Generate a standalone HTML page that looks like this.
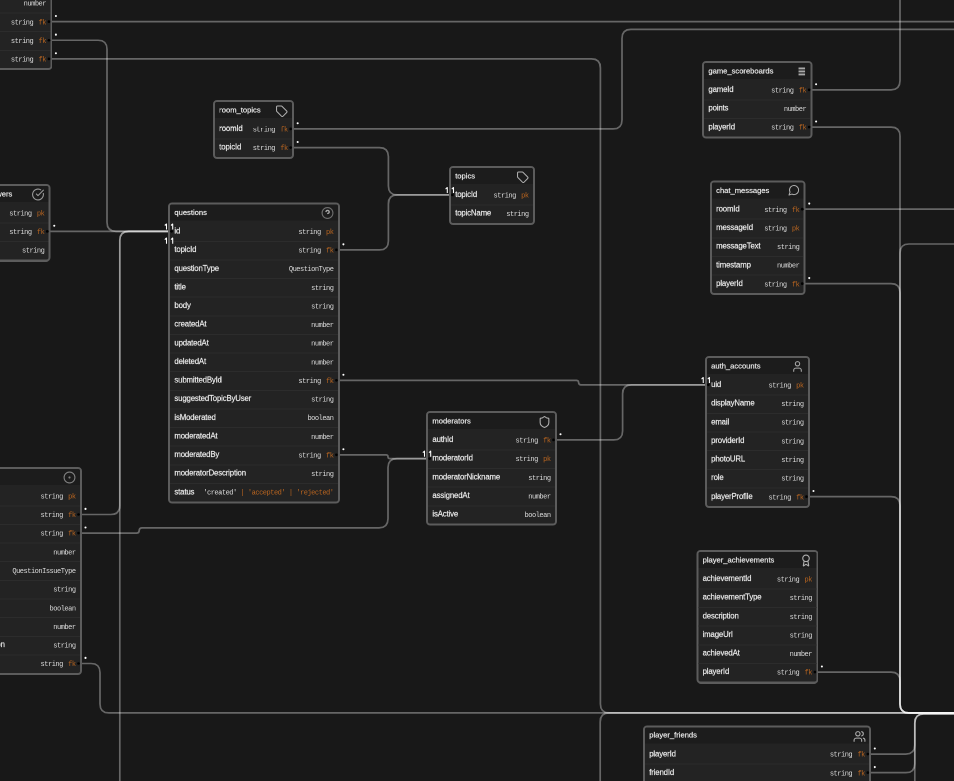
<!DOCTYPE html>
<html><head><meta charset="utf-8"><style>
html,body{margin:0;padding:0;background:#181818;width:954px;height:781px;overflow:hidden}
body{position:relative;font-family:"Liberation Sans",sans-serif}
#c{position:absolute;left:0;top:0;width:1908px;height:1562px;transform:scale(0.5);transform-origin:0 0;will-change:transform}
.tb{position:absolute;box-sizing:border-box;border:4px solid #5c5c5c;border-radius:8px;background:#232323;overflow:hidden}
.hd{position:absolute;left:0;right:0;top:-4px;background:#1c1c1c}
.tt,.fn,.tw{position:absolute;white-space:pre}
.tt{-webkit-text-stroke-width:0.36px;font-size:15.2px;line-height:18.24px;color:#ececec;margin-left:-4px;margin-top:-4px}
.fn{-webkit-text-stroke-width:0.36px;letter-spacing:-0.3px;font-size:15.6px;line-height:18.72px;color:#ececec;margin-left:-4px;margin-top:-4px}
.tw{font-family:"Liberation Mono",monospace;font-size:14px;letter-spacing:-0.96px;line-height:16.8px;margin-right:-4px;margin-top:-4px}
.ic{position:absolute;color:#b0b0b0;margin-left:-4px;margin-top:-4px}
.sp{position:absolute;left:0;right:0;height:2px;background:#2c2c2c;margin-top:-4px}
.ty{color:#dedede}
.ky{color:#bb6620;margin-left:10.6px}
.ky0{color:#bb6620}
svg.edges{position:absolute;left:0;top:0;overflow:visible}
.lb{font-family:"Liberation Sans",sans-serif;font-size:8px;fill:#fff}
.one{font-family:"Liberation Sans",sans-serif;font-size:8.3px;fill:#fff}
</style></head>
<body>
<svg class="edges" width="954" height="781" viewBox="0 0 954 781"><path d="M51.30 21.64 L960.00 21.64" fill="none" stroke="#ffffff" stroke-opacity="0.34" stroke-width="1.7"/><path d="M51.30 40.27 L98.00 40.27 Q107.00 40.27 107.00 49.27 L107.00 222.30 Q107.00 231.30 116.00 231.30 L169.10 231.30" fill="none" stroke="#ffffff" stroke-opacity="0.34" stroke-width="1.7"/><path d="M51.30 58.89 L591.40 58.89 Q600.40 58.89 600.40 67.89 L600.40 703.90 Q600.40 712.90 609.40 712.90 L960.00 712.90" fill="none" stroke="#ffffff" stroke-opacity="0.34" stroke-width="1.7"/><path d="M49.65 231.38 L169.10 231.30" fill="none" stroke="#ffffff" stroke-opacity="0.34" stroke-width="1.7"/><path d="M80.90 514.49 L110.80 514.49 Q119.80 514.49 119.80 505.49 L119.80 240.30 Q119.80 231.30 128.80 231.30 L169.10 231.30" fill="none" stroke="#ffffff" stroke-opacity="0.34" stroke-width="1.7"/><path d="M119.80 800.00 L119.80 240.30 Q119.80 231.30 128.80 231.30 L169.10 231.30" fill="none" stroke="#ffffff" stroke-opacity="0.34" stroke-width="1.7"/><path d="M80.90 533.12 L136.54 533.12 Q139.20 533.12 139.20 530.46 L139.20 530.46 Q139.20 527.80 141.86 527.80 L379.00 527.80 Q388.00 527.80 388.00 518.80 L388.00 467.53 Q388.00 458.53 397.00 458.53 L427.10 458.53" fill="none" stroke="#ffffff" stroke-opacity="0.34" stroke-width="1.7"/><path d="M338.80 454.86 L386.16 454.86 Q388.00 454.86 388.00 456.69 L388.00 456.69 Q388.00 458.53 389.84 458.53 L427.10 458.53" fill="none" stroke="#ffffff" stroke-opacity="0.34" stroke-width="1.7"/><path d="M80.90 663.52 L91.00 663.52 Q100.00 663.52 100.00 672.52 L100.00 703.90 Q100.00 712.90 109.00 712.90 L960.00 712.90" fill="none" stroke="#ffffff" stroke-opacity="0.34" stroke-width="1.7"/><path d="M293.08 128.90 L613.00 128.90 Q622.00 128.90 622.00 119.90 L622.00 38.40 Q622.00 29.40 631.00 29.40 L960.00 29.40" fill="none" stroke="#ffffff" stroke-opacity="0.34" stroke-width="1.7"/><path d="M293.08 147.53 L379.40 147.53 Q388.40 147.53 388.40 156.53 L388.40 185.89 Q388.40 194.89 397.40 194.89 L449.90 194.89" fill="none" stroke="#ffffff" stroke-opacity="0.34" stroke-width="1.7"/><path d="M338.80 249.93 L379.40 249.93 Q388.40 249.93 388.40 240.93 L388.40 203.89 Q388.40 194.89 397.40 194.89 L449.90 194.89" fill="none" stroke="#ffffff" stroke-opacity="0.34" stroke-width="1.7"/><path d="M338.80 380.33 L576.34 380.33 Q578.60 380.33 578.60 382.60 L578.60 382.60 Q578.60 384.86 580.86 384.86 L705.85 384.86" fill="none" stroke="#ffffff" stroke-opacity="0.34" stroke-width="1.7"/><path d="M555.90 439.90 L613.60 439.90 Q622.60 439.90 622.60 430.90 L622.60 393.86 Q622.60 384.86 631.60 384.86 L705.85 384.86" fill="none" stroke="#ffffff" stroke-opacity="0.34" stroke-width="1.7"/><path d="M811.50 89.86 L891.00 89.86 Q900.00 89.86 900.00 80.86 L900.00 -20.00" fill="none" stroke="#ffffff" stroke-opacity="0.34" stroke-width="1.7"/><path d="M811.50 127.12 L891.00 127.12 Q900.00 127.12 900.00 136.12 L900.00 703.90 Q900.00 712.90 909.00 712.90 L960.00 712.90" fill="none" stroke="#ffffff" stroke-opacity="0.34" stroke-width="1.7"/><path d="M804.65 209.19 L960.00 209.19" fill="none" stroke="#ffffff" stroke-opacity="0.34" stroke-width="1.7"/><path d="M804.65 283.71 L891.00 283.71 Q900.00 283.71 900.00 292.71 L900.00 703.90 Q900.00 712.90 909.00 712.90 L960.00 712.90" fill="none" stroke="#ffffff" stroke-opacity="0.34" stroke-width="1.7"/><path d="M808.87 496.64 L891.00 496.64 Q900.00 496.64 900.00 505.64 L900.00 703.90 Q900.00 712.90 909.00 712.90 L960.00 712.90" fill="none" stroke="#ffffff" stroke-opacity="0.34" stroke-width="1.7"/><path d="M960.00 244.00 L909.00 244.00 Q900.00 244.00 900.00 253.00 L900.00 703.90 Q900.00 712.90 909.00 712.90 L960.00 712.90" fill="none" stroke="#ffffff" stroke-opacity="0.34" stroke-width="1.7"/><path d="M817.30 672.04 L891.00 672.04 Q900.00 672.04 900.00 681.04 L900.00 703.90 Q900.00 712.90 909.00 712.90 L960.00 712.90" fill="none" stroke="#ffffff" stroke-opacity="0.34" stroke-width="1.7"/><path d="M600.20 800.00 L600.20 721.90 Q600.20 712.90 609.20 712.90 L960.00 712.90" fill="none" stroke="#ffffff" stroke-opacity="0.34" stroke-width="1.7"/><path d="M870.20 754.09 L905.80 754.09 Q914.80 754.09 914.80 745.09 L914.80 723.00 Q914.80 714.00 923.80 714.00 L960.00 714.00" fill="none" stroke="#ffffff" stroke-opacity="0.34" stroke-width="1.7"/><path d="M870.20 772.72 L905.80 772.72 Q914.80 772.72 914.80 763.72 L914.80 723.00 Q914.80 714.00 923.80 714.00 L960.00 714.00" fill="none" stroke="#ffffff" stroke-opacity="0.34" stroke-width="1.7"/><path d="M914.80 800.00 L914.80 723.00 Q914.80 714.00 923.80 714.00 L960.00 714.00" fill="none" stroke="#ffffff" stroke-opacity="0.34" stroke-width="1.7"/></svg>
<div id="c"><div class="tb" style="left:-280px;top:-126.1px;width:384.6px;height:266.5px"><div class="hd" style="height:36px"></div><div class="tt" style="left:12.6px;top:10.813px">users</div><svg class="ic" style="color:#a8a8a8;left:346.6px;top:8.2px;width:26px;height:26px" viewBox="0 0 24 24" fill="none" stroke="currentColor" stroke-width="2" stroke-linecap="round" stroke-linejoin="round"><path d="M19 21v-2a4 4 0 0 0-4-4H9a4 4 0 0 0-4 4v2"/><circle cx="12" cy="7" r="4"/></svg><div class="fn" style="left:12.6px;top:48.005px">id</div><div class="tw" style="right:12.6px;top:50.839px"><span class="ty">string</span><span class="ky">pk</span></div><div class="sp" style="top:76.6px"></div><div class="fn" style="left:12.6px;top:85.265px">email</div><div class="tw" style="right:12.6px;top:88.099px"><span class="ty">string</span></div><div class="sp" style="top:113.86px"></div><div class="fn" style="left:12.6px;top:122.525px">createdAt</div><div class="tw" style="right:12.6px;top:125.359px"><span class="ty">number</span></div><div class="sp" style="top:151.12px"></div><div class="fn" style="left:12.6px;top:159.785px">roomId</div><div class="tw" style="right:12.6px;top:162.619px"><span class="ty">string</span><span class="ky">fk</span></div><div class="sp" style="top:188.38px"></div><div class="fn" style="left:12.6px;top:197.045px">gameId</div><div class="tw" style="right:12.6px;top:199.879px"><span class="ty">string</span><span class="ky">fk</span></div><div class="sp" style="top:225.64px"></div><div class="fn" style="left:12.6px;top:234.305px">teamId</div><div class="tw" style="right:12.6px;top:237.139px"><span class="ty">string</span><span class="ky">fk</span></div></div><div class="tb" style="left:-44.6px;top:367.92px;width:145.9px;height:154.72px"><div class="hd" style="height:36px"></div><div class="tt" style="left:12.6px;top:10.813px">answers</div><svg class="ic" style="color:#9a9a9a;left:107.9px;top:8.2px;width:26px;height:26px" viewBox="0 0 24 24" fill="none" stroke="currentColor" stroke-width="2" stroke-linecap="round" stroke-linejoin="round"><path d="M21.801 10A10 10 0 1 1 17 3.335"/><path d="m9 11 3 3L22 4"/></svg><div class="fn" style="left:12.6px;top:48.005px">id</div><div class="tw" style="right:12.6px;top:50.839px"><span class="ty">string</span><span class="ky">pk</span></div><div class="sp" style="top:76.6px"></div><div class="fn" style="left:12.6px;top:85.265px">qId</div><div class="tw" style="right:12.6px;top:88.099px"><span class="ty">string</span><span class="ky">fk</span></div><div class="sp" style="top:113.86px"></div><div class="fn" style="left:12.6px;top:122.525px">text</div><div class="tw" style="right:12.6px;top:125.359px"><span class="ty">string</span></div></div><div class="tb" style="left:425.92px;top:200.2px;width:162.24px;height:117.46px"><div class="hd" style="height:36px"></div><div class="tt" style="left:12.6px;top:10.813px">room_topics</div><svg class="ic" style="color:#b0b0b0;left:125.16px;top:9.32px;width:24.96px;height:24.96px" viewBox="0 0 24 24" fill="none" stroke="currentColor" stroke-width="2" stroke-linecap="round" stroke-linejoin="round"><path d="M12.586 2.586A2 2 0 0 0 11.172 2H4a2 2 0 0 0-2 2v7.172a2 2 0 0 0 .586 1.414l8.704 8.704a2.426 2.426 0 0 0 3.42 0l6.58-6.58a2.426 2.426 0 0 0 0-3.42z"/></svg><div class="fn" style="left:12.6px;top:48.005px">roomId</div><div class="tw" style="right:12.6px;top:50.839px"><span class="ty">string</span><span class="ky">fk</span></div><div class="sp" style="top:76.6px"></div><div class="fn" style="left:12.6px;top:85.265px">topicId</div><div class="tw" style="right:12.6px;top:88.099px"><span class="ty">string</span><span class="ky">fk</span></div></div><div class="tb" style="left:336.2px;top:405px;width:343.4px;height:601.84px"><div class="hd" style="height:36px"></div><div class="tt" style="left:12.6px;top:10.813px">questions</div><svg class="ic" style="color:#7e7e7e;left:305.4px;top:8.2px;width:26px;height:26px" viewBox="0 0 24 24" fill="none" stroke="currentColor" stroke-width="2" stroke-linecap="round" stroke-linejoin="round"><circle cx="12" cy="12" r="10" stroke="#6e6e6e"/><path d="M9.3 9.2a3 3 0 0 1 5.8 1c0 2-2.6 2.6-2.6 2.6" stroke="#a8a8a8" stroke-width="2.6"/></svg><div class="fn" style="left:12.6px;top:48.005px">id</div><div class="tw" style="right:12.6px;top:50.839px"><span class="ty">string</span><span class="ky">pk</span></div><div class="sp" style="top:76.6px"></div><div class="fn" style="left:12.6px;top:85.265px">topicId</div><div class="tw" style="right:12.6px;top:88.099px"><span class="ty">string</span><span class="ky">fk</span></div><div class="sp" style="top:113.86px"></div><div class="fn" style="left:12.6px;top:122.525px">questionType</div><div class="tw" style="right:12.6px;top:125.359px"><span class="ty">QuestionType</span></div><div class="sp" style="top:151.12px"></div><div class="fn" style="left:12.6px;top:159.785px">title</div><div class="tw" style="right:12.6px;top:162.619px"><span class="ty">string</span></div><div class="sp" style="top:188.38px"></div><div class="fn" style="left:12.6px;top:197.045px">body</div><div class="tw" style="right:12.6px;top:199.879px"><span class="ty">string</span></div><div class="sp" style="top:225.64px"></div><div class="fn" style="left:12.6px;top:234.305px">createdAt</div><div class="tw" style="right:12.6px;top:237.139px"><span class="ty">number</span></div><div class="sp" style="top:262.9px"></div><div class="fn" style="left:12.6px;top:271.565px">updatedAt</div><div class="tw" style="right:12.6px;top:274.399px"><span class="ty">number</span></div><div class="sp" style="top:300.16px"></div><div class="fn" style="left:12.6px;top:308.825px">deletedAt</div><div class="tw" style="right:12.6px;top:311.659px"><span class="ty">number</span></div><div class="sp" style="top:337.42px"></div><div class="fn" style="left:12.6px;top:346.085px">submittedById</div><div class="tw" style="right:12.6px;top:348.919px"><span class="ty">string</span><span class="ky">fk</span></div><div class="sp" style="top:374.68px"></div><div class="fn" style="left:12.6px;top:383.345px">suggestedTopicByUser</div><div class="tw" style="right:12.6px;top:386.179px"><span class="ty">string</span></div><div class="sp" style="top:411.94px"></div><div class="fn" style="left:12.6px;top:420.605px">isModerated</div><div class="tw" style="right:12.6px;top:423.439px"><span class="ty">boolean</span></div><div class="sp" style="top:449.2px"></div><div class="fn" style="left:12.6px;top:457.865px">moderatedAt</div><div class="tw" style="right:12.6px;top:460.699px"><span class="ty">number</span></div><div class="sp" style="top:486.46px"></div><div class="fn" style="left:12.6px;top:495.125px">moderatedBy</div><div class="tw" style="right:12.6px;top:497.959px"><span class="ty">string</span><span class="ky">fk</span></div><div class="sp" style="top:523.72px"></div><div class="fn" style="left:12.6px;top:532.385px">moderatorDescription</div><div class="tw" style="right:12.6px;top:535.219px"><span class="ty">string</span></div><div class="sp" style="top:560.98px"></div><div class="fn" style="left:12.6px;top:569.645px">status</div><div class="tw" style="right:12.6px;top:572.479px"><span class="ty">'created'</span><span class="ky0"> | 'accepted' | 'rejected'</span></div></div><div class="tb" style="left:897.8px;top:332.2px;width:172px;height:117.46px"><div class="hd" style="height:36px"></div><div class="tt" style="left:12.6px;top:10.813px">topics</div><svg class="ic" style="color:#b0b0b0;left:134.92px;top:9.32px;width:24.96px;height:24.96px" viewBox="0 0 24 24" fill="none" stroke="currentColor" stroke-width="2" stroke-linecap="round" stroke-linejoin="round"><path d="M12.586 2.586A2 2 0 0 0 11.172 2H4a2 2 0 0 0-2 2v7.172a2 2 0 0 0 .586 1.414l8.704 8.704a2.426 2.426 0 0 0 3.42 0l6.58-6.58a2.426 2.426 0 0 0 0-3.42z"/></svg><div class="fn" style="left:12.6px;top:48.005px">topicId</div><div class="tw" style="right:12.6px;top:50.839px"><span class="ty">string</span><span class="ky">pk</span></div><div class="sp" style="top:76.6px"></div><div class="fn" style="left:12.6px;top:85.265px">topicName</div><div class="tw" style="right:12.6px;top:88.099px"><span class="ty">string</span></div></div><div class="tb" style="left:-67.6px;top:934.12px;width:231.4px;height:415.54px"><div class="hd" style="height:36px"></div><div class="tt" style="left:12.6px;top:10.813px">reports</div><svg class="ic" style="color:#808080;left:193.4px;top:8.2px;width:26px;height:26px" viewBox="0 0 24 24" fill="none" stroke="currentColor" stroke-width="2" stroke-linecap="round" stroke-linejoin="round"><circle cx="12" cy="12" r="10"/><circle cx="12" cy="12" r="1"/></svg><div class="fn" style="left:12.6px;top:48.005px">id</div><div class="tw" style="right:12.6px;top:50.839px"><span class="ty">string</span><span class="ky">pk</span></div><div class="sp" style="top:76.6px"></div><div class="fn" style="left:12.6px;top:85.265px">qid</div><div class="tw" style="right:12.6px;top:88.099px"><span class="ty">string</span><span class="ky">fk</span></div><div class="sp" style="top:113.86px"></div><div class="fn" style="left:12.6px;top:122.525px">mid</div><div class="tw" style="right:12.6px;top:125.359px"><span class="ty">string</span><span class="ky">fk</span></div><div class="sp" style="top:151.12px"></div><div class="fn" style="left:12.6px;top:159.785px">at</div><div class="tw" style="right:12.6px;top:162.619px"><span class="ty">number</span></div><div class="sp" style="top:188.38px"></div><div class="fn" style="left:12.6px;top:197.045px">type</div><div class="tw" style="right:12.6px;top:199.879px"><span class="ty">QuestionIssueType</span></div><div class="sp" style="top:225.64px"></div><div class="fn" style="left:12.6px;top:234.305px">text</div><div class="tw" style="right:12.6px;top:237.139px"><span class="ty">string</span></div><div class="sp" style="top:262.9px"></div><div class="fn" style="left:12.6px;top:271.565px">done</div><div class="tw" style="right:12.6px;top:274.399px"><span class="ty">boolean</span></div><div class="sp" style="top:300.16px"></div><div class="fn" style="left:12.6px;top:308.825px">ts</div><div class="tw" style="right:12.6px;top:311.659px"><span class="ty">number</span></div><div class="sp" style="top:337.42px"></div><div class="fn" style="left:12.6px;top:346.085px">resolution</div><div class="tw" style="right:12.6px;top:348.919px"><span class="ty">string</span></div><div class="sp" style="top:374.68px"></div><div class="fn" style="left:12.6px;top:383.345px">by</div><div class="tw" style="right:12.6px;top:386.179px"><span class="ty">string</span><span class="ky">fk</span></div></div><div class="tb" style="left:852.2px;top:822.2px;width:261.6px;height:229.24px"><div class="hd" style="height:36px"></div><div class="tt" style="left:12.6px;top:10.813px">moderators</div><svg class="ic" style="color:#b0b0b0;left:223.6px;top:9.2px;width:26px;height:26px" viewBox="0 0 24 24" fill="none" stroke="currentColor" stroke-width="2" stroke-linecap="round" stroke-linejoin="round"><path d="M20 13c0 5-3.5 7.5-7.66 8.95a1 1 0 0 1-.67-.01C7.5 20.5 4 18 4 13V6a1 1 0 0 1 1-1c2 0 4.5-1.2 6.24-2.72a1.17 1.17 0 0 1 1.52 0C14.51 3.81 17 5 19 5a1 1 0 0 1 1 1z"/></svg><div class="fn" style="left:12.6px;top:48.005px">authId</div><div class="tw" style="right:12.6px;top:50.839px"><span class="ty">string</span><span class="ky">fk</span></div><div class="sp" style="top:76.6px"></div><div class="fn" style="left:12.6px;top:85.265px">moderatorId</div><div class="tw" style="right:12.6px;top:88.099px"><span class="ty">string</span><span class="ky">pk</span></div><div class="sp" style="top:113.86px"></div><div class="fn" style="left:12.6px;top:122.525px">moderatorNickname</div><div class="tw" style="right:12.6px;top:125.359px"><span class="ty">string</span></div><div class="sp" style="top:151.12px"></div><div class="fn" style="left:12.6px;top:159.785px">assignedAt</div><div class="tw" style="right:12.6px;top:162.619px"><span class="ty">number</span></div><div class="sp" style="top:188.38px"></div><div class="fn" style="left:12.6px;top:197.045px">isActive</div><div class="tw" style="right:12.6px;top:199.879px"><span class="ty">boolean</span></div></div><div class="tb" style="left:1404.2px;top:122.12px;width:220.8px;height:154.72px"><div class="hd" style="height:36px"></div><div class="tt" style="left:12.6px;top:10.813px">game_scoreboards</div><svg class="ic" style="color:#a8a8a8;left:182.8px;top:8.2px;width:26px;height:26px" viewBox="0 0 24 24" fill="none" stroke="currentColor" stroke-width="2" stroke-linecap="round" stroke-linejoin="round"><path d="M9.3 6.3h12M9.3 11.9h12M9.3 17.5h12" stroke-width="3.4" stroke-linecap="butt"/></svg><div class="fn" style="left:12.6px;top:48.005px">gameId</div><div class="tw" style="right:12.6px;top:50.839px"><span class="ty">string</span><span class="ky">fk</span></div><div class="sp" style="top:76.6px"></div><div class="fn" style="left:12.6px;top:85.265px">points</div><div class="tw" style="right:12.6px;top:88.099px"><span class="ty">number</span></div><div class="sp" style="top:113.86px"></div><div class="fn" style="left:12.6px;top:122.525px">playerId</div><div class="tw" style="right:12.6px;top:125.359px"><span class="ty">string</span><span class="ky">fk</span></div></div><div class="tb" style="left:1419.7px;top:360.8px;width:191.6px;height:229.24px"><div class="hd" style="height:36px"></div><div class="tt" style="left:12.6px;top:10.813px">chat_messages</div><svg class="ic" style="color:#b0b0b0;left:156.11px;top:7.51px;width:24.18px;height:24.18px" viewBox="0 0 24 24" fill="none" stroke="currentColor" stroke-width="2" stroke-linecap="round" stroke-linejoin="round"><path d="M7.9 20A9 9 0 1 0 4 16.1L2 22Z"/></svg><div class="fn" style="left:12.6px;top:48.005px">roomId</div><div class="tw" style="right:12.6px;top:50.839px"><span class="ty">string</span><span class="ky">fk</span></div><div class="sp" style="top:76.6px"></div><div class="fn" style="left:12.6px;top:85.265px">messageId</div><div class="tw" style="right:12.6px;top:88.099px"><span class="ty">string</span><span class="ky">pk</span></div><div class="sp" style="top:113.86px"></div><div class="fn" style="left:12.6px;top:122.525px">messageText</div><div class="tw" style="right:12.6px;top:125.359px"><span class="ty">string</span></div><div class="sp" style="top:151.12px"></div><div class="fn" style="left:12.6px;top:159.785px">timestamp</div><div class="tw" style="right:12.6px;top:162.619px"><span class="ty">number</span></div><div class="sp" style="top:188.38px"></div><div class="fn" style="left:12.6px;top:197.045px">playerId</div><div class="tw" style="right:12.6px;top:199.879px"><span class="ty">string</span><span class="ky">fk</span></div></div><div class="tb" style="left:1409.7px;top:712.12px;width:210.04px;height:303.76px"><div class="hd" style="height:36px"></div><div class="tt" style="left:12.6px;top:10.813px">auth_accounts</div><svg class="ic" style="color:#a8a8a8;left:172.04px;top:8.2px;width:26px;height:26px" viewBox="0 0 24 24" fill="none" stroke="currentColor" stroke-width="2" stroke-linecap="round" stroke-linejoin="round"><path d="M19 21v-2a4 4 0 0 0-4-4H9a4 4 0 0 0-4 4v2"/><circle cx="12" cy="7" r="4"/></svg><div class="fn" style="left:12.6px;top:48.005px">uid</div><div class="tw" style="right:12.6px;top:50.839px"><span class="ty">string</span><span class="ky">pk</span></div><div class="sp" style="top:76.6px"></div><div class="fn" style="left:12.6px;top:85.265px">displayName</div><div class="tw" style="right:12.6px;top:88.099px"><span class="ty">string</span></div><div class="sp" style="top:113.86px"></div><div class="fn" style="left:12.6px;top:122.525px">email</div><div class="tw" style="right:12.6px;top:125.359px"><span class="ty">string</span></div><div class="sp" style="top:151.12px"></div><div class="fn" style="left:12.6px;top:159.785px">providerId</div><div class="tw" style="right:12.6px;top:162.619px"><span class="ty">string</span></div><div class="sp" style="top:188.38px"></div><div class="fn" style="left:12.6px;top:197.045px">photoURL</div><div class="tw" style="right:12.6px;top:199.879px"><span class="ty">string</span></div><div class="sp" style="top:225.64px"></div><div class="fn" style="left:12.6px;top:234.305px">role</div><div class="tw" style="right:12.6px;top:237.139px"><span class="ty">string</span></div><div class="sp" style="top:262.9px"></div><div class="fn" style="left:12.6px;top:271.565px">playerProfile</div><div class="tw" style="right:12.6px;top:274.399px"><span class="ty">string</span><span class="ky">fk</span></div></div><div class="tb" style="left:1392.6px;top:1100.2px;width:244px;height:266.5px"><div class="hd" style="height:36px"></div><div class="tt" style="left:12.6px;top:10.813px">player_achievements</div><svg class="ic" style="color:#b0b0b0;left:206px;top:8.2px;width:26px;height:26px" viewBox="0 0 24 24" fill="none" stroke="currentColor" stroke-width="2" stroke-linecap="round" stroke-linejoin="round"><path d="m15.477 12.89 1.515 8.526a.5.5 0 0 1-.81.47l-3.58-2.687a1 1 0 0 0-1.197 0l-3.586 2.686a.5.5 0 0 1-.81-.469l1.514-8.526"/><circle cx="12" cy="8" r="6"/></svg><div class="fn" style="left:12.6px;top:48.005px">achievementId</div><div class="tw" style="right:12.6px;top:50.839px"><span class="ty">string</span><span class="ky">pk</span></div><div class="sp" style="top:76.6px"></div><div class="fn" style="left:12.6px;top:85.265px">achievementType</div><div class="tw" style="right:12.6px;top:88.099px"><span class="ty">string</span></div><div class="sp" style="top:113.86px"></div><div class="fn" style="left:12.6px;top:122.525px">description</div><div class="tw" style="right:12.6px;top:125.359px"><span class="ty">string</span></div><div class="sp" style="top:151.12px"></div><div class="fn" style="left:12.6px;top:159.785px">imageUrl</div><div class="tw" style="right:12.6px;top:162.619px"><span class="ty">string</span></div><div class="sp" style="top:188.38px"></div><div class="fn" style="left:12.6px;top:197.045px">achievedAt</div><div class="tw" style="right:12.6px;top:199.879px"><span class="ty">number</span></div><div class="sp" style="top:225.64px"></div><div class="fn" style="left:12.6px;top:234.305px">playerId</div><div class="tw" style="right:12.6px;top:237.139px"><span class="ty">string</span><span class="ky">fk</span></div></div><div class="tb" style="left:1285.92px;top:1450.6px;width:456.48px;height:191.98px"><div class="hd" style="height:36px"></div><div class="tt" style="left:12.6px;top:10.813px">player_friends</div><svg class="ic" style="color:#b0b0b0;left:419.88px;top:9px;width:26px;height:26px" viewBox="0 0 24 24" fill="none" stroke="currentColor" stroke-width="2" stroke-linecap="round" stroke-linejoin="round"><path d="M16 21v-2a4 4 0 0 0-4-4H6a4 4 0 0 0-4 4v2"/><circle cx="9" cy="7" r="4"/><path d="M22 21v-2a4 4 0 0 0-3-3.87"/><path d="M16 3.13a4 4 0 0 1 0 7.75"/></svg><div class="fn" style="left:12.6px;top:48.005px">playerId</div><div class="tw" style="right:12.6px;top:50.839px"><span class="ty">string</span><span class="ky">fk</span></div><div class="sp" style="top:76.6px"></div><div class="fn" style="left:12.6px;top:85.265px">friendId</div><div class="tw" style="right:12.6px;top:88.099px"><span class="ty">string</span><span class="ky">fk</span></div><div class="sp" style="top:113.86px"></div><div class="fn" style="left:12.6px;top:122.525px">status</div><div class="tw" style="right:12.6px;top:125.359px"><span class="ty">string</span></div><div class="sp" style="top:151.12px"></div><div class="fn" style="left:12.6px;top:159.785px">createdAt</div><div class="tw" style="right:12.6px;top:162.619px"><span class="ty">number</span></div></div></div>
<svg class="edges" width="954" height="781" viewBox="0 0 954 781"><circle cx="48.90" cy="21.64" r="1.35" fill="#000"/><circle cx="55.90" cy="16.04" r="1.05" fill="#fff"/><circle cx="48.90" cy="40.27" r="1.35" fill="#000"/><circle cx="55.90" cy="34.66" r="1.05" fill="#fff"/><circle cx="48.90" cy="58.89" r="1.35" fill="#000"/><circle cx="55.90" cy="53.29" r="1.05" fill="#fff"/><circle cx="47.25" cy="231.38" r="1.35" fill="#000"/><circle cx="54.25" cy="225.78" r="1.05" fill="#fff"/><circle cx="78.50" cy="514.49" r="1.35" fill="#000"/><circle cx="85.50" cy="508.88" r="1.05" fill="#fff"/><circle cx="78.50" cy="533.12" r="1.35" fill="#000"/><circle cx="85.50" cy="527.51" r="1.05" fill="#fff"/><circle cx="336.40" cy="454.86" r="1.35" fill="#000"/><circle cx="343.40" cy="449.25" r="1.05" fill="#fff"/><circle cx="78.50" cy="663.52" r="1.35" fill="#000"/><circle cx="85.50" cy="657.92" r="1.05" fill="#fff"/><circle cx="290.68" cy="128.90" r="1.35" fill="#000"/><circle cx="297.68" cy="123.30" r="1.05" fill="#fff"/><circle cx="290.68" cy="147.53" r="1.35" fill="#000"/><circle cx="297.68" cy="141.93" r="1.05" fill="#fff"/><circle cx="336.40" cy="249.93" r="1.35" fill="#000"/><circle cx="343.40" cy="244.33" r="1.05" fill="#fff"/><circle cx="336.40" cy="380.33" r="1.35" fill="#000"/><circle cx="343.40" cy="374.73" r="1.05" fill="#fff"/><circle cx="553.50" cy="439.90" r="1.35" fill="#000"/><circle cx="560.50" cy="434.30" r="1.05" fill="#fff"/><circle cx="809.10" cy="89.86" r="1.35" fill="#000"/><circle cx="816.10" cy="84.26" r="1.05" fill="#fff"/><circle cx="809.10" cy="127.12" r="1.35" fill="#000"/><circle cx="816.10" cy="121.52" r="1.05" fill="#fff"/><circle cx="802.25" cy="209.19" r="1.35" fill="#000"/><circle cx="809.25" cy="203.59" r="1.05" fill="#fff"/><circle cx="802.25" cy="283.71" r="1.35" fill="#000"/><circle cx="809.25" cy="278.11" r="1.05" fill="#fff"/><circle cx="806.47" cy="496.64" r="1.35" fill="#000"/><circle cx="813.47" cy="491.04" r="1.05" fill="#fff"/><circle cx="814.90" cy="672.04" r="1.35" fill="#000"/><circle cx="821.90" cy="666.44" r="1.05" fill="#fff"/><circle cx="867.80" cy="754.09" r="1.35" fill="#000"/><circle cx="874.80" cy="748.49" r="1.05" fill="#fff"/><circle cx="867.80" cy="772.72" r="1.35" fill="#000"/><circle cx="874.80" cy="767.12" r="1.05" fill="#fff"/><circle cx="171.60" cy="231.30" r="1.35" fill="#000"/><path d="M166.50 229.50V223.90l-1.7 1.6" fill="none" stroke="#fff" stroke-width="1.05" stroke-linejoin="round"/><path d="M172.70 229.50V223.90l-1.7 1.6" fill="none" stroke="#fff" stroke-width="1.05" stroke-linejoin="round"/><circle cx="429.60" cy="458.53" r="1.35" fill="#000"/><path d="M424.50 456.73V451.13l-1.7 1.6" fill="none" stroke="#fff" stroke-width="1.05" stroke-linejoin="round"/><path d="M430.70 456.73V451.13l-1.7 1.6" fill="none" stroke="#fff" stroke-width="1.05" stroke-linejoin="round"/><circle cx="452.40" cy="194.89" r="1.35" fill="#000"/><path d="M447.30 193.09V187.49l-1.7 1.6" fill="none" stroke="#fff" stroke-width="1.05" stroke-linejoin="round"/><path d="M453.50 193.09V187.49l-1.7 1.6" fill="none" stroke="#fff" stroke-width="1.05" stroke-linejoin="round"/><circle cx="708.35" cy="384.86" r="1.35" fill="#000"/><path d="M703.25 383.06V377.46l-1.7 1.6" fill="none" stroke="#fff" stroke-width="1.05" stroke-linejoin="round"/><path d="M709.45 383.06V377.46l-1.7 1.6" fill="none" stroke="#fff" stroke-width="1.05" stroke-linejoin="round"/><path d="M166.50 243.80V238.00l-1.7 1.6" fill="none" stroke="#fff" stroke-width="1.05" stroke-linejoin="round"/><path d="M172.70 243.80V238.00l-1.7 1.6" fill="none" stroke="#fff" stroke-width="1.05" stroke-linejoin="round"/></svg>
</body></html>
